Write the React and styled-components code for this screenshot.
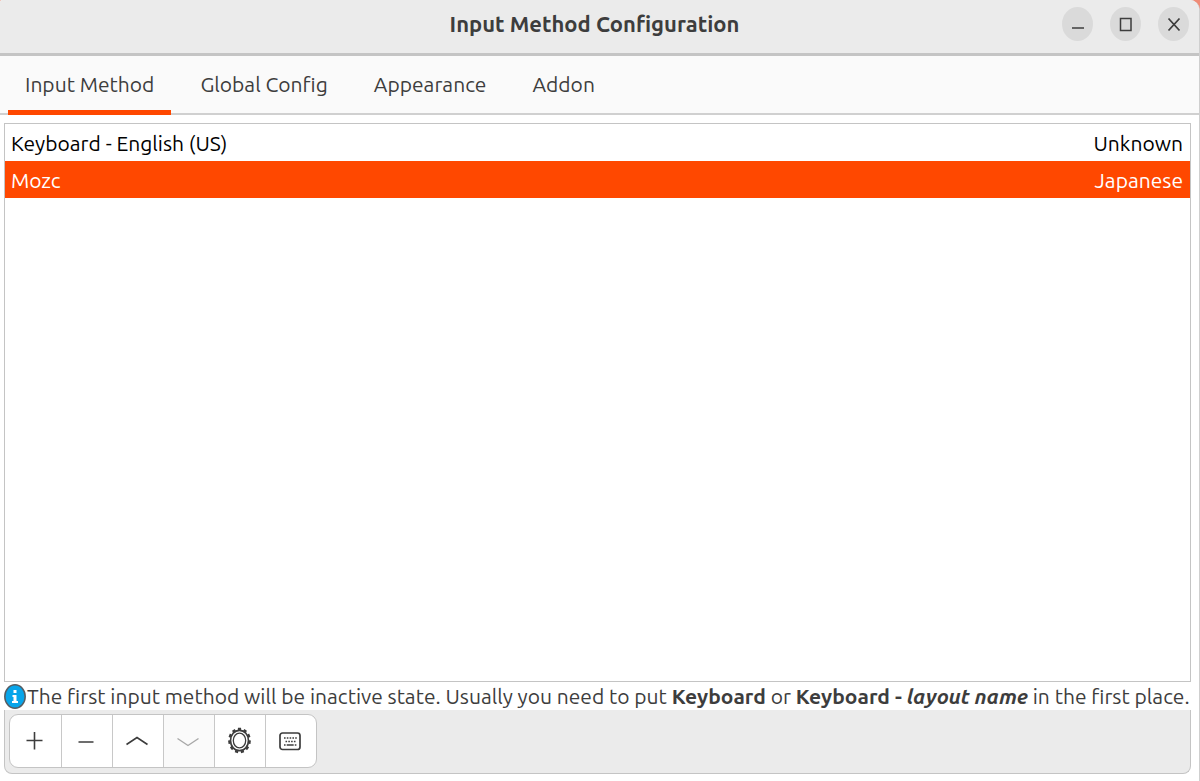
import React, { useState } from "react";
import styled, { createGlobalStyle } from "styled-components";

const GlobalStyle = createGlobalStyle`
  * { box-sizing: border-box; }
  html, body, #root { height: 100%; }
  body {
    margin: 0;
    background: #fff;
    color: #3d3d3d;
    font-family: Ubuntu, Lato, "Liberation Sans", sans-serif;
    font-size: 21px;
    line-height: 28px;
  }
  button { font: inherit; color: inherit; padding: 0; border: 0; background: none; }
`;

const Desktop = styled.div`
  min-height: 100%;
  display: flex;
  background: #f08c78;
`;

const Window = styled.div`
  flex: 1;
  display: flex;
  flex-direction: column;
  min-width: 0;
  background: #fff;
  border-right: 1px solid #cfcfcf;
  border-radius: 2px 10px 0 0;
  overflow: hidden;
`;

const TitleBar = styled.header`
  display: grid;
  grid-template-columns: 1fr auto 1fr;
  align-items: center;
  height: 56px;
  padding: 0 10px 6px 0;
  background: #ebebeb;
  border-bottom: 3px solid #c4c4c4;
`;

const Title = styled.h1`
  grid-column: 2;
  margin: 0;
  font-size: 22px;
  font-weight: 700;
`;

const WindowControls = styled.div`
  display: flex;
  justify-content: flex-end;
  gap: 17px;
`;

const WindowButton = styled.button`
  display: grid;
  width: 31px;
  height: 34px;
  place-items: center;
  border-radius: 50%;
  background: #dadada;
`;

const Tabs = styled.nav`
  display: flex;
  height: 59px;
  padding: 0 8px;
  gap: 12px;
  background: #fafafa;
  border-bottom: 2px solid #d0d0d0;
`;

const Tab = styled.button`
  height: 59px;
  padding: 2px 17px 0;
  border-bottom: 5px solid ${(p) => (p.$active ? "#ff4800" : "transparent")};
`;

const Panel = styled.main`
  flex: 1;
  display: flex;
  flex-direction: column;
  padding: 8px 8px 7px 4px;
`;

const MethodList = styled.div`
  flex: 1;
  border: 1px solid #c4c4c4;
`;

const MethodTable = styled.table`
  width: 100%;
  border-collapse: collapse;
`;

const MethodRow = styled.tr`
  height: 37px;
  color: ${(p) => (p.$selected ? "#fff" : "#000")};
  background: ${(p) => (p.$selected ? "#ff4800" : "#fff")};
`;

const Cell = styled.td`
  padding: 0 7px 0 6px;
  text-align: ${(p) => p.$align || "left"};
`;

const Note = styled.p`
  display: flex;
  align-items: center;
  margin: 0;
  height: 28px;
  white-space: nowrap;
  svg { flex: none; }
`;

const Toolbar = styled.div`
  display: flex;
  height: 64px;
  padding: 4px;
  background: #ebebeb;
  border: 1px solid #c4c4c4;
  border-top: 0;
  border-radius: 0 0 8px 8px;
`;

const ButtonGroup = styled.div`
  display: flex;
  height: 54px;
  border: 1px solid #c4c4c4;
  border-radius: 9px;
  background: #fff;
  overflow: hidden;
`;

const ToolButton = styled.button`
  display: grid;
  width: 51px;
  place-items: center;
  color: #3d3d3d;
  & + & { border-left: 1px solid #c8c8c8; }
  &:disabled { background: #fafafa; color: #a8a8a8; }
`;

const Icon = ({ size = 24, stroke = 2, children }) => (
  <svg width={size} height={size} viewBox={`0 0 ${size} ${size}`} fill="none" stroke="currentColor" strokeWidth={stroke} aria-hidden="true">
    {children}
  </svg>
);

const InfoIcon = () => (
  <svg width="23" height="27" viewBox="0 0 23 27" aria-hidden="true">
    <ellipse cx="11" cy="13.5" rx="10.2" ry="11.8" fill="#08a5ea" stroke="#555d63" strokeWidth="1.5" />
    <path d="M9.5 7h3v3h-3zM8.5 12h4v6h1.5v2h-6v-2h1.5v-4h-1z" fill="#fff" />
  </svg>
);

const teeth = Array.from({ length: 11 }, (_, i) => (i * 360) / 11);

const GearIcon = () => (
  <Icon size={28}>
    <ellipse cx="13.5" cy="13.5" rx="9" ry="10.2" strokeWidth="1.7" />
    <ellipse cx="13.5" cy="13.5" rx="6.2" ry="7.4" strokeWidth="1.3" />
    <g transform="translate(13.5 13.5) scale(1 1.12)">
      {teeth.map((a) => <path key={a} d="M-1.6 -10.2h3.2" strokeWidth="2.2" transform={`rotate(${a})`} />)}
    </g>
  </Icon>
);

const KeyboardIcon = () => (
  <Icon size={24}>
    <rect x="1" y="4" width="20" height="16.500" rx="2.5" strokeWidth="1.7" />
    <path d="M5 9h13" strokeWidth="1.5" strokeDasharray="1.6 1.2" />
    <path d="M6.5 12.5h10" strokeWidth="1.5" strokeDasharray="1.6 1.2" />
    <path d="M5 16h1.6M7.7 16h7M15.8 16h1.6" strokeWidth="1.6" />
  </Icon>
);

const tabs = ["Input Method", "Global Config", "Appearance", "Addon"];
const methods = [
  { name: "Keyboard - English (US)", language: "Unknown" },
  { name: "Mozc", language: "Japanese" },
];

export default function App() {
  const [tab, setTab] = useState(0);
  const [selected, setSelected] = useState(1);
  return (
    <Desktop>
      <GlobalStyle />
      <Window>
        <TitleBar>
          <Title>Input Method Configuration</Title>
          <WindowControls>
            <WindowButton aria-label="Minimize"><Icon size={16}><path d="M2 12h12" strokeWidth="1.6" /></Icon></WindowButton>
            <WindowButton aria-label="Maximize"><Icon size={16} stroke={1.5}><rect x="2.5" y="2.5" width="10.5" height="12" /></Icon></WindowButton>
            <WindowButton aria-label="Close"><Icon size={16} stroke={1.8}><path d="M2.5 2.5l11 12M13.5 2.5l-11 12" /></Icon></WindowButton>
          </WindowControls>
        </TitleBar>
        <Tabs role="tablist">
          {tabs.map((name, i) => (
            <Tab key={name} role="tab" aria-selected={tab === i} $active={tab === i} onClick={() => setTab(i)}>{name}</Tab>
          ))}
        </Tabs>
        <Panel>
          <MethodList>
            <MethodTable>
              <tbody>
                {methods.map((m, i) => (
                  <MethodRow key={m.name} $selected={selected === i} onClick={() => setSelected(i)}>
                    <Cell>{m.name}</Cell>
                    <Cell $align="right">{m.language}</Cell>
                  </MethodRow>
                ))}
              </tbody>
            </MethodTable>
          </MethodList>
          <Note>
            <InfoIcon />
            <span>
              The first input method will be inactive state. Usually you need to put <b>Keyboard</b> or <b>Keyboard - <i>layout name</i></b> in the first place.
            </span>
          </Note>
          <Toolbar>
            <ButtonGroup>
              <ToolButton aria-label="Add"><Icon><path d="M2.500 11.500h16M10.500 3v17.500" strokeWidth="1.6" /></Icon></ToolButton>
              <ToolButton aria-label="Remove"><Icon><path d="M3.500 13h15" strokeWidth="1.6" /></Icon></ToolButton>
              <ToolButton aria-label="Move up"><Icon><path d="M.5 15.500L11 8.500L21.500 15.500" strokeWidth="1.6" /></Icon></ToolButton>
              <ToolButton aria-label="Move down" disabled><Icon><path d="M.5 9.500L11 16.500L21.500 9.500" strokeWidth="1.4" /></Icon></ToolButton>
              <ToolButton aria-label="Configure"><GearIcon /></ToolButton>
              <ToolButton aria-label="Keyboard layout"><KeyboardIcon /></ToolButton>
            </ButtonGroup>
          </Toolbar>
        </Panel>
      </Window>
    </Desktop>
  );
}
